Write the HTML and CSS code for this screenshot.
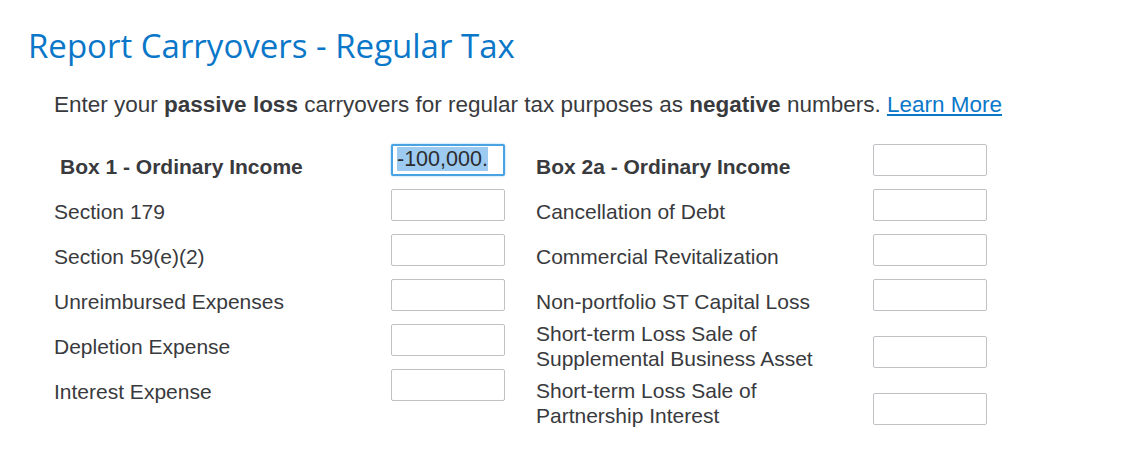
FILE: index.html
```html
<!DOCTYPE html>
<html lang="en">
<head>
    <meta charset="utf-8">
    <title>Report Carryovers - Regular Tax</title>
    <link rel="stylesheet" href="styles.css">
</head>
<body>
    <div class="page">
        <h1 class="title">Report Carryovers - Regular Tax</h1>

        <p class="intro">Enter your <b>passive loss</b> carryovers for regular tax purposes as <b>negative</b> numbers. <a href="#" class="learn">Learn More</a></p>

        <div class="columns">
            <div class="col">
                <div class="row"><label class="lbl head">Box 1 - Ordinary Income</label><span class="field active"><span class="sel">-100,000.</span></span></div>
                <div class="row"><label class="lbl">Section 179</label><input class="field" type="text"></div>
                <div class="row"><label class="lbl">Section 59(e)(2)</label><input class="field" type="text"></div>
                <div class="row"><label class="lbl">Unreimbursed Expenses</label><input class="field" type="text"></div>
                <div class="row"><label class="lbl">Depletion Expense</label><input class="field" type="text"></div>
                <div class="row"><label class="lbl">Interest Expense</label><input class="field" type="text"></div>
            </div>
            <div class="col">
                <div class="row"><label class="lbl head">Box 2a - Ordinary Income</label><input class="field" type="text"></div>
                <div class="row"><label class="lbl">Cancellation of Debt</label><input class="field" type="text"></div>
                <div class="row"><label class="lbl">Commercial Revitalization</label><input class="field" type="text"></div>
                <div class="row"><label class="lbl">Non-portfolio ST Capital Loss</label><input class="field" type="text"></div>
                <div class="row tall"><label class="lbl">Short-term Loss Sale of<br>Supplemental Business Asset</label><input class="field" type="text"></div>
                <div class="row tall"><label class="lbl">Short-term Loss Sale of<br>Partnership Interest</label><input class="field" type="text"></div>
            </div>
        </div>
    </div>
</body>
</html>
```

FILE: styles.css
```css
body {
    margin: 0;
    background: white;
    color: #393a3d;
    font-family: "Liberation Sans", Arial, sans-serif;
}

.page {
    padding: 24px 0 0 28px;
}

h1.title {
    margin: 0;
    color: #0a77c9;
    font-family: "Open Sans", sans-serif;
    font-weight: 400;
    font-size: 33px;
    line-height: 44px;
}

p.intro {
    margin: 25px 0 0 26px;
    font-size: 22.5px;
    line-height: 24px;
}

a.learn {
    color: #0a77c9;
}

.columns {
    display: flex;
    margin: 27px 0 0 26px;
}

.col {
    display: flex;
    flex-direction: column;
    gap: 10px;
}

.col + .col {
    margin-left: 31px;
}

.row {
    display: flex;
    align-items: flex-end;
    height: 35px;
}

.row.tall {
    height: 47px;
}

.lbl {
    flex: none;
    width: 337px;
    font-size: 21px;
    line-height: 25px;
}

.lbl.head {
    font-weight: bold;
    padding-left: 6px;
    width: 331px;
}

.col + .col .lbl.head {
    padding-left: 0;
    width: 337px;
}

.field {
    display: block;
    flex: none;
    box-sizing: border-box;
    width: 114px;
    height: 32px;
    margin: 0 0 3px;
    border: 1px solid #bfc1c5;
    border-radius: 2px;
    background: white;
    font: inherit;
}

.field.active {
    border: 2px solid #4aa2e0;
    box-shadow: 0 0 2px #7fc0ee;
    font-size: 21.5px;
    line-height: 27px;
    padding-left: 4px;
}

.sel {
    background: #9ccaf1;
    color: #2b2c2e;
}
```
